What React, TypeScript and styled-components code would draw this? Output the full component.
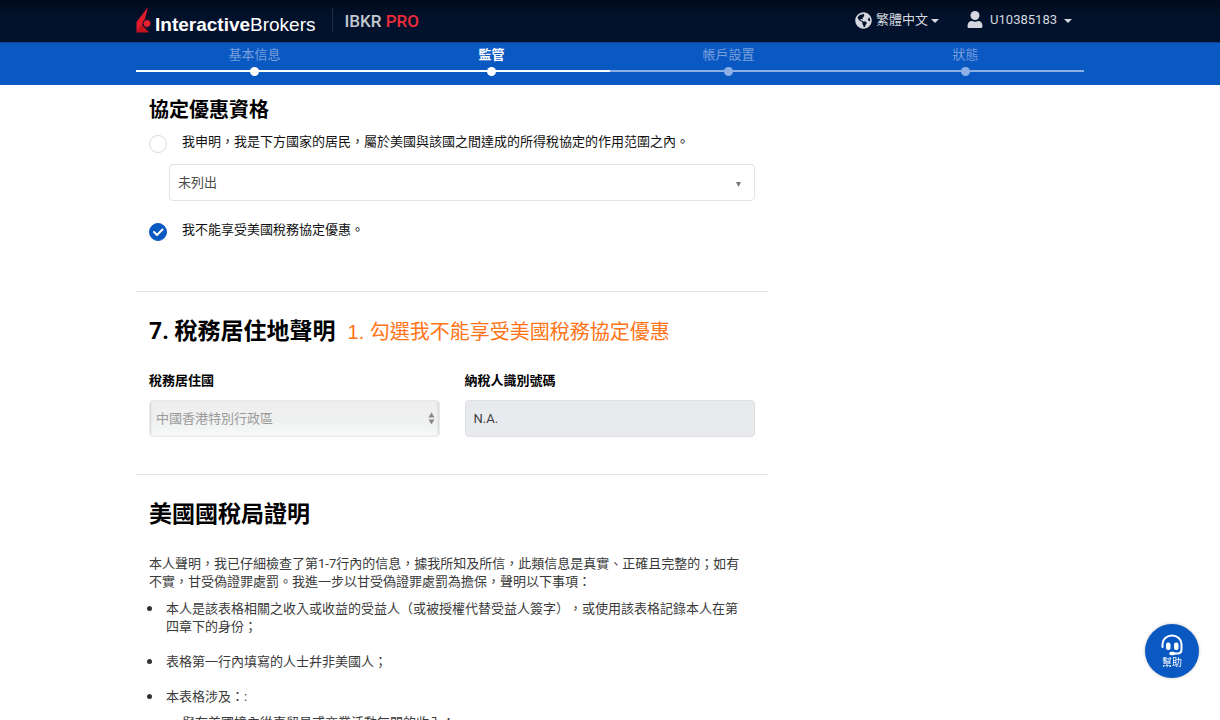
import React from "react";
import styled, { createGlobalStyle } from "styled-components";
import { FaGlobeAmericas } from "react-icons/fa";

const cjk = `"Noto Sans CJK TC", sans-serif`;

const GlobalStyle = createGlobalStyle`
  *, *::before, *::after { box-sizing: border-box; }
  body {
    margin: 0;
    background: #fff;
    color: #3a3a3a;
    font-family: Roboto, ${cjk};
    font-size: 13px;
    line-height: 18px;
    text-spacing-trim: space-all;
  }
  h2, h3, p, ul, ol { margin: 0; padding: 0; }
  button, input, select { font: inherit; }
`;

const Container = styled.div`
  width: 100%;
  max-width: 948px;
  margin: 0 auto;
`;

const Header = styled.header`
  position: sticky;
  top: 0;
  z-index: 2;
`;

const TopBar = styled.div`
  background: linear-gradient(#010a1a, #02122d 20px);
`;

const TopBarInner = styled(Container)`
  display: flex;
  align-items: center;
  justify-content: space-between;
  height: 42px;
  padding: 0 12px 2px 0;
`;

const Brand = styled.a`
  display: flex;
  align-items: center;
  color: #fff;
  text-decoration: none;
`;

const LogoMark = styled.svg`
  width: 15px;
  height: 26px;
  margin-right: 4px;
`;

const BrandName = styled.span`
  padding-top: 10px;
  font-family: "Liberation Sans", sans-serif;
  font-size: 19px;
  line-height: 22px;

  b { font-weight: 700; }
`;

const Product = styled.span`
  margin-left: 16px;
  padding: 2px 0 0 12px;
  border-left: 1px solid #1e2c45;
  color: #c3c8d0;
  font-size: 17px;
  font-weight: 500;
  line-height: 22px;

  em { color: #ee2b3b; font-style: normal; }
`;

const Menus = styled.nav`
  display: flex;
  gap: 28px;
`;

const MenuButton = styled.button<{ $gap: number }>`
  display: flex;
  align-items: center;
  gap: ${(p) => p.$gap}px;
  padding: 0;
  border: 0;
  background: none;
  color: #d5d8de;
  line-height: 18px;
  cursor: pointer;
`;

const Caret = styled.span<{ $gap: number }>`
  display: inline-block;
  margin-left: ${(p) => p.$gap}px;
  vertical-align: middle;
  border: 4px solid transparent;
  border-top-color: currentColor;
  border-bottom: 0;
`;

const StepBar = styled.div`
  background: #0a58c2;
  border-top: 1px solid #0a4292;
`;

const Steps = styled.ol`
  display: grid;
  grid-template-columns: repeat(4, 1fr);
  height: 42px;
  padding-top: 3px;
  list-style: none;
`;

const Step = styled.li<{ $reached?: boolean; $current?: boolean }>`
  display: flex;
  flex-direction: column;
  gap: 6px;
  text-align: center;
  color: ${(p) => (p.$current ? "#fff" : "#799fdc")};
  font-weight: ${(p) => (p.$current ? 700 : 400)};
  --line: ${(p) => (p.$reached ? "#fff" : "#8dafe5")};
`;

const Track = styled.span`
  display: flex;
  align-items: center;
  justify-content: center;
  height: 2px;
  background: var(--line);

  &::after {
    content: "";
    flex: none;
    width: 9px;
    height: 9px;
    border-radius: 50%;
    background: var(--line);
  }
`;

const Main = styled.main`
  width: 100%;
  max-width: 632px;
`;

const Section = styled.section`
  padding: 0 13px;

  & + & { border-top: 1px solid #e3e4e6; }
`;

const TreatySection = styled(Section)`
  padding-top: 11px;
  padding-bottom: 50px;
`;

const ResidencySection = styled(Section)`
  padding-top: 23px;
  padding-bottom: 37px;
`;

const CertSection = styled(Section)`
  padding-top: 23px;
  padding-bottom: 40px;
`;

const Subtitle = styled.h3`
  color: #000;
  font-size: 20px;
  font-weight: 700;
  line-height: 28px;
`;

const TitleRow = styled.div`
  display: flex;
  align-items: baseline;
  gap: 12px;
`;

const Title = styled.h2`
  color: #000;
  font-size: 23px;
  font-weight: 700;
  line-height: 34px;
`;

const Note = styled.span`
  color: #ff7417;
  font-family: "Liberation Sans", ${cjk};
  font-size: 20px;
  line-height: 30px;
`;

const RadioLabel = styled.label`
  display: flex;
  align-items: flex-start;
  gap: 15px;
  color: #111;
`;

const Radio = styled.input`
  appearance: none;
  flex: none;
  width: 18px;
  height: 18px;
  margin: 2px 0 0;
  border: 1px solid #d8d8d8;
  border-radius: 50%;
  background: #fff;

  &:checked {
    border-color: #0a58c2;
    background: #0a58c2 url("data:image/svg+xml,%3Csvg xmlns='http://www.w3.org/2000/svg' viewBox='0 0 36 36'%3E%3Cpath d='M10 18l6 6 11-11' fill='none' stroke='white' stroke-width='4' stroke-linecap='round' stroke-linejoin='round'/%3E%3C/svg%3E") center / 18px;
  }
`;

const RadioGroup = styled.div`
  display: flex;
  flex-direction: column;
  gap: 20px;
  padding-top: 9px;
`;

const Choice = styled.div`
  display: flex;
  flex-direction: column;
  gap: 11px;
`;

const SelectWrap = styled.div`
  position: relative;
`;

const TreatySelectWrap = styled(SelectWrap)`
  margin-left: 20px;
`;

const Select = styled.select`
  appearance: none;
  display: block;
  width: 100%;
  height: 37px;
  padding: 0 24px 0 8px;
  border: 1px solid #e2e2e4;
  border-radius: 4px;
  background: #fff;
  color: #4a4a4a;
`;

const CountrySelect = styled(Select)`
  padding-left: 6px;
  border-color: #e9eaeb;
  background: linear-gradient(#eeeeee, #f0f1f1 60%, #f7f8f8);
  box-shadow: inset 2px 0 2px -1px #d4d4d4, inset -2px 0 2px -1px #d4d4d4;

  &:disabled { color: #9b9b9b; opacity: 1; }
`;

const SelectArrow = styled.svg<{ $right: number }>`
  position: absolute;
  top: 12px;
  right: ${(p) => p.$right}px;
  width: 7px;
  height: 13px;
  pointer-events: none;
`;

const Fields = styled.div`
  display: grid;
  grid-template-columns: 1fr 1fr;
  gap: 25px;
  padding-top: 23px;
`;

const Field = styled.div`
  display: flex;
  flex-direction: column;
  gap: 10px;
`;

const FieldLabel = styled.label`
  color: #000;
  font-weight: 700;
`;

const TextInput = styled.input`
  width: 100%;
  height: 37px;
  padding: 0 8px;
  border: 1px solid #dfe0e3;
  border-radius: 4px;
  background: #e9eaee;
  color: #3f3f3f;
`;

const Statement = styled.div`
  padding: 23px 12px 0 0;
`;

const Bullets = styled.ul`
  display: flex;
  flex-direction: column;
  gap: 17px;
  padding: 9px 0 0 17px;
`;

const Bullet = styled.li`
  list-style: none;

  &::before {
    content: "";
    float: left;
    width: 5px;
    height: 5px;
    margin: 6px 0 0 -19px;
    border-radius: 50%;
    background: #333;
  }
`;

const SubList = styled.ul`
  padding: 8px 0 0 16px;
  list-style: none;
`;

const HelpButton = styled.button`
  position: fixed;
  right: 21px;
  bottom: 42px;
  display: flex;
  flex-direction: column;
  align-items: center;
  width: 54px;
  height: 54px;
  padding: 10px 0 0;
  border: 0;
  border-radius: 50%;
  background: #0a58c2;
  box-shadow: 0 0 3px rgba(0, 0, 0, 0.3);
  color: #fff;
  font-size: 10px;
  line-height: 14px;
  cursor: pointer;

  svg { width: 22px; height: 22px; }
`;

const steps = [
  { label: "基本信息", reached: true },
  { label: "監管", reached: true, current: true },
  { label: "帳戶設置" },
  { label: "狀態" },
];

export default function App() {
  return (
    <>
      <GlobalStyle />
      <Header>
        <TopBar>
          <TopBarInner>
            <Brand href="#">
              <LogoMark viewBox="0 0 30 52" aria-hidden="true">
                <path d="M24 0L1 30v21L15 32 18 24z" fill="#e01b2c" />
                <path d="M12 35L1 51h25z" fill="#c4141f" />
                <circle cx="22" cy="33" r="8" fill="#e8202f" stroke="#02122d" strokeWidth="2" />
              </LogoMark>
              <BrandName><b>Interactive</b>Brokers</BrandName>
              <Product>IBKR <em>PRO</em></Product>
            </Brand>
            <Menus>
              <MenuButton type="button" $gap={4}>
                <FaGlobeAmericas size={17} />
                <span>繁體中文<Caret $gap={3} /></span>
              </MenuButton>
              <MenuButton type="button" $gap={7}>
                <svg width="16" height="18" viewBox="0 0 32 36" fill="currentColor" aria-hidden="true">
                  <circle cx="16" cy="9" r="9" />
                  <path d="M1 31q0-11 9-11 6 3 12 0 9 0 9 11 0 3-3 3H4q-3 0-3-3z" />
                </svg>
                <span>U10385183<Caret $gap={7} /></span>
              </MenuButton>
            </Menus>
          </TopBarInner>
        </TopBar>
        <StepBar>
          <Container>
            <Steps>
              {steps.map((s) => (
                <Step key={s.label} $reached={s.reached} $current={s.current}>
                  {s.label}
                  <Track />
                </Step>
              ))}
            </Steps>
          </Container>
        </StepBar>
      </Header>
      <Container>
        <Main>
          <TreatySection>
            <Subtitle>協定優惠資格</Subtitle>
            <RadioGroup>
              <Choice>
                <RadioLabel>
                  <Radio type="radio" name="treaty" />
                  我申明，我是下方國家的居民，屬於美國與該國之間達成的所得稅協定的作用范圍之內。
                </RadioLabel>
                <TreatySelectWrap>
                  <Select aria-label="國家"><option>未列出</option></Select>
                  <SelectArrow $right={13} viewBox="0 0 14 26" aria-hidden="true">
                    <path d="M2 12h10L7 22z" fill="#777" />
                  </SelectArrow>
                </TreatySelectWrap>
              </Choice>
              <RadioLabel>
                <Radio type="radio" name="treaty" defaultChecked />
                我不能享受美國稅務協定優惠。
              </RadioLabel>
            </RadioGroup>
          </TreatySection>
          <ResidencySection>
            <TitleRow>
              <Title>7. 稅務居住地聲明</Title>
              <Note>1. 勾選我不能享受美國稅務協定優惠</Note>
            </TitleRow>
            <Fields>
              <Field>
                <FieldLabel htmlFor="country">稅務居住國</FieldLabel>
                <SelectWrap>
                  <CountrySelect id="country" disabled><option>中國香港特別行政區</option></CountrySelect>
                  <SelectArrow $right={5} viewBox="0 0 14 26" aria-hidden="true">
                    <path d="M7 1l6 10H1zM7 25L1 15h12z" fill="#888" />
                  </SelectArrow>
                </SelectWrap>
              </Field>
              <Field>
                <FieldLabel htmlFor="tin">納稅人識別號碼</FieldLabel>
                <TextInput id="tin" defaultValue="N.A." readOnly />
              </Field>
            </Fields>
          </ResidencySection>
          <CertSection>
            <Title>美國國稅局證明</Title>
            <Statement>
              <p>本人聲明，我已仔細檢查了第1-7行內的信息，據我所知及所信，此類信息是真實、正確且完整的；如有不實，甘受偽證罪處罰。我進一步以甘受偽證罪處罰為擔保，聲明以下事項：</p>
              <Bullets>
                <Bullet>本人是該表格相關之收入或收益的受益人（或被授權代替受益人簽字），或使用該表格記錄本人在第四章下的身份；</Bullet>
                <Bullet>表格第一行內填寫的人士幷非美國人；</Bullet>
                <Bullet>
                  本表格涉及：:
                  <SubList><li>與在美國境內從事貿易或商業活動無關的收入；</li></SubList>
                </Bullet>
              </Bullets>
            </Statement>
          </CertSection>
        </Main>
      </Container>
      <HelpButton type="button">
        <svg viewBox="0 0 44 44" fill="none" stroke="#fff" strokeLinecap="round" aria-hidden="true">
          <path d="M3 26v-6a19 17 0 0 1 38 0v11q0 8-8 8H24" strokeWidth="4" />
          <rect x="10" y="17" width="9" height="15" rx="4" fill="#fff" stroke="none" />
          <rect x="26" y="17" width="9" height="15" rx="4" fill="#fff" stroke="none" />
          <path d="M20 39h5" strokeWidth="7" />
        </svg>
        幫助
      </HelpButton>
    </>
  );
}
